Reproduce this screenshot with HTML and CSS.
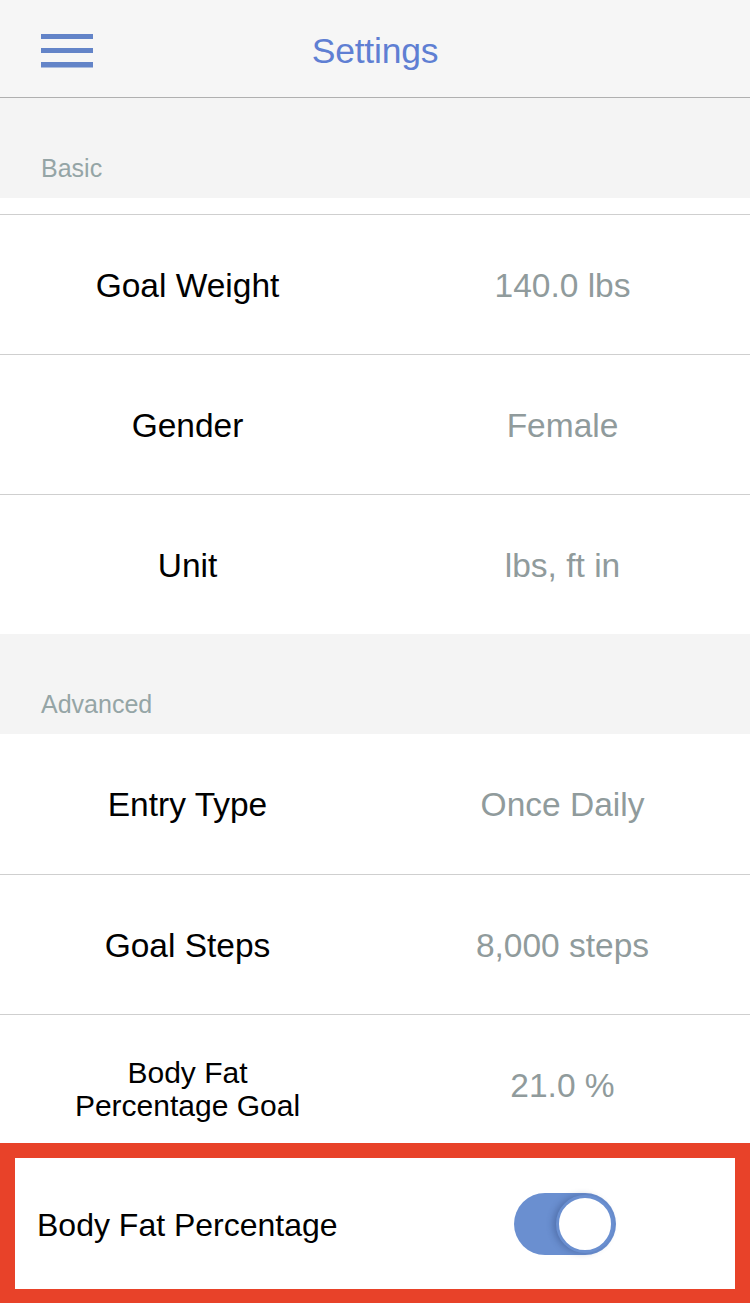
FILE: index.html
```html
<!DOCTYPE html>
<html>
<head>
<meta charset="utf-8">
<link rel="stylesheet" href="styles.css">
</head>
<body>
<div class="app">
  <header class="topbar">
    <div class="menu-btn">
      <svg width="52" height="36" viewBox="0 0 52 36"><rect x="0" y="1" width="52" height="5" fill="#6384c8"/><rect x="0" y="15" width="52" height="5" fill="#6384c8"/><rect x="0" y="29" width="52" height="5.5" fill="#6384c8"/></svg>
    </div>
    <div class="title">Settings</div>
  </header>

  <div class="section-head">Basic</div>
  <div class="spacer"></div>
  <div class="row bordered"><div class="label">Goal Weight</div><div class="value">140.0 lbs</div></div>
  <div class="row bordered"><div class="label">Gender</div><div class="value">Female</div></div>
  <div class="row bordered"><div class="label">Unit</div><div class="value">lbs, ft in</div></div>

  <div class="section-head">Advanced</div>
  <div class="row"><div class="label">Entry Type</div><div class="value">Once Daily</div></div>
  <div class="row bordered"><div class="label">Goal Steps</div><div class="value">8,000 steps</div></div>
  <div class="row bordered"><div class="label label-small">Body Fat<br>Percentage Goal</div><div class="value">21.0 %</div></div>
  <div class="row toggle-row">
    <div class="label-left">Body Fat Percentage</div>
    <div class="toggle-cell"><div class="toggle"><div class="knob"></div></div></div>
    <div class="highlight"></div>
  </div>
</div>
</body>
</html>
```

FILE: styles.css
```css
html, body {
  margin: 0;
  padding: 0;
  background: #ffffff;
}
body {
  font-family: "Liberation Sans", Arial, sans-serif;
  width: 750px;
  height: 1303px;
  overflow: hidden;
}
.app {
  display: flex;
  flex-direction: column;
}
.topbar {
  position: relative;
  height: 97px;
  background: #f6f6f6;
  border-bottom: 1px solid #b0b0b0;
  display: flex;
  align-items: center;
  justify-content: center;
}
.menu-btn {
  position: absolute;
  left: 41px;
  top: 33px;
  width: 52px;
  height: 36px;
}
.menu-btn svg { display: block; }
.title {
  color: #5f7fd3;
  font-size: 35.5px;
  letter-spacing: -0.2px;
  margin-top: 6px;
}
.section-head {
  height: 100px;
  box-sizing: border-box;
  background: #f4f4f4;
  color: #95a5a6;
  font-size: 25px;
  display: flex;
  align-items: flex-end;
  padding: 0 0 15px 41px;
}
.section-head + .row {
  margin-top: 0;
}
.spacer {
  height: 16px;
  background: #ffffff;
}
.row {
  height: 140px;
  box-sizing: border-box;
  display: grid;
  grid-template-columns: 1fr 1fr;
  align-items: center;
  background: #fff;
}
.row.bordered {
  border-top: 1px solid #cfcfcf;
}
.label {
  text-align: center;
  color: #000;
  font-size: 33.5px;
  padding-top: 2px;
}
.label-small {
  font-size: 30px;
  line-height: 33px;
  padding-top: 8px;
}
.value {
  text-align: center;
  color: #909b9c;
  font-size: 33.5px;
  padding-top: 2px;
}
.toggle-row {
  position: relative;
}
.label-left {
  color: #000;
  font-size: 32px;
  padding-left: 37px;
  padding-top: 2px;
}
.toggle-cell {
  display: flex;
  justify-content: flex-start;
  padding-left: 139px;
}
.toggle {
  width: 102px;
  height: 62px;
  border-radius: 31px;
  background: #6a8fd0;
  position: relative;
}
.knob {
  position: absolute;
  right: 2px;
  top: 2px;
  width: 52px;
  height: 52px;
  border-radius: 50%;
  background: #fff;
  border: 3px solid #6a8fd0;
  box-shadow: -3px 0 6px rgba(40, 60, 110, 0.35);
}
.highlight {
  position: absolute;
  left: 0;
  right: 0;
  top: -11px;
  height: 161px;
  box-sizing: border-box;
  border: 15px solid #e84229;
  pointer-events: none;
}
```
